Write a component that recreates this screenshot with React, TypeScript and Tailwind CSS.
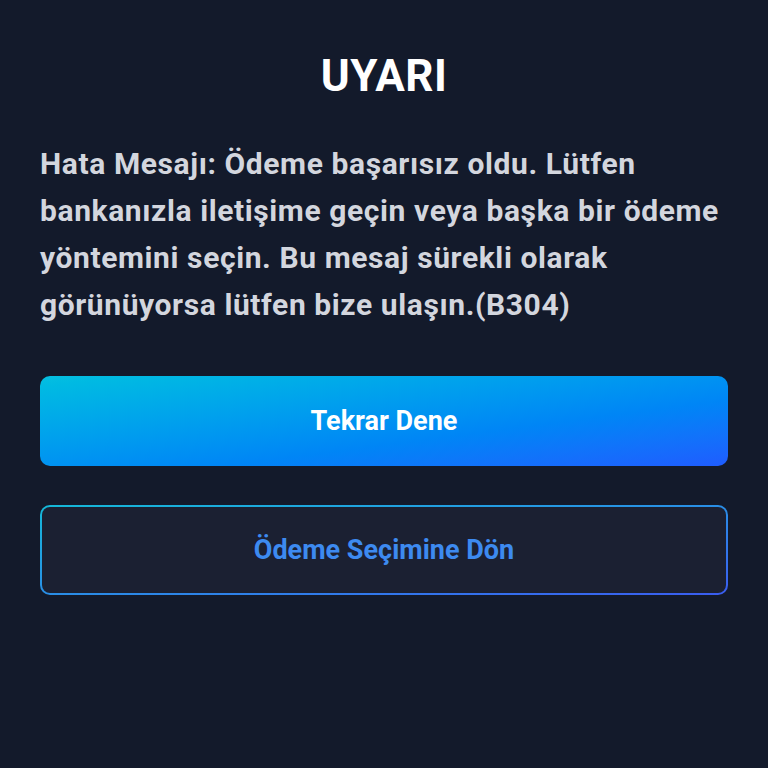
import React from 'react';

export default function App() {
  return (
    <div className="min-h-screen w-full bg-[#131a2b] font-['Roboto','Noto_Sans',sans-serif] px-10 pt-[50px]">
      <h1 className="text-center text-[44px] leading-[52px] font-bold text-white tracking-[0.5px]">UYARI</h1>

      <p className="mt-[38px] text-[30px] leading-[47px] font-bold tracking-[0.6px] text-[#d3d6de]">
        Hata Mesajı: Ödeme başarısız oldu. Lütfen bankanızla iletişime geçin veya başka bir ödeme yöntemini seçin. Bu mesaj sürekli olarak görünüyorsa lütfen bize ulaşın.(B304)
      </p>

      <div className="mt-[48px] flex flex-col gap-[39px]">
        <button className="h-[90px] w-full rounded-[10px] bg-linear-to-br from-[#06bfe0] to-[#1f5cff] text-[27px] font-bold text-white">
          Tekrar Dene
        </button>

        <div className="rounded-[10px] bg-linear-to-br from-[#14b8d8] to-[#3a5cf0] p-[2px]">
          <button className="h-[86px] w-full rounded-[8px] bg-[#1b2032] text-[27px] font-bold text-[#3d8af0]">
            Ödeme Seçimine Dön
          </button>
        </div>
      </div>
    </div>
  );
}
